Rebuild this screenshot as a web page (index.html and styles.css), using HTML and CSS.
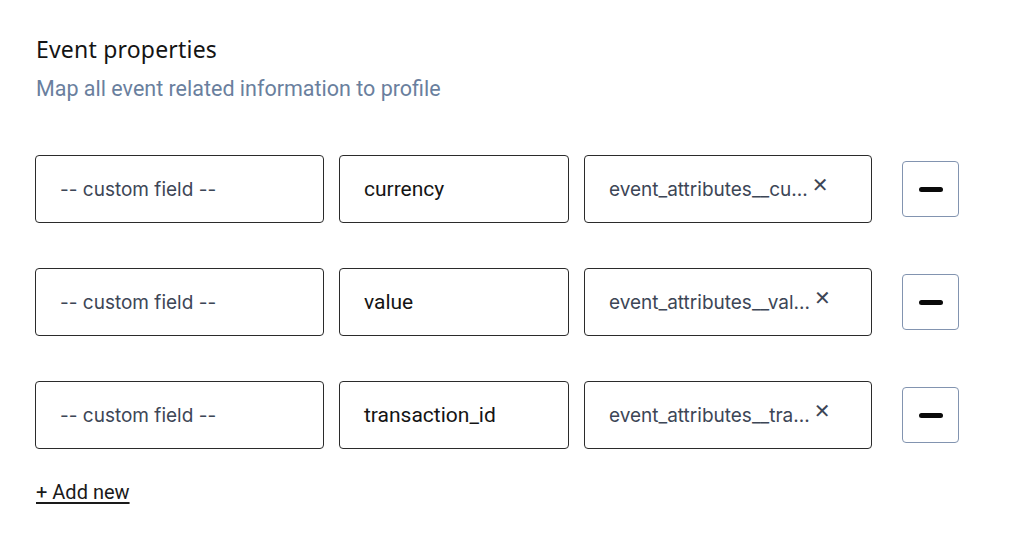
FILE: index.html
```html
<!DOCTYPE html>
<html>
<head>
<meta charset="utf-8">
<link rel="stylesheet" href="styles.css">
</head>
<body>
<section class="panel">
  <h2 class="title">Event properties</h2>
  <p class="subtitle">Map all event related information to profile</p>
  <div class="rows">
    <div class="row">
      <div class="field field-a"><span class="muted">-- custom field --</span></div>
      <div class="field field-b"><span class="value">currency</span></div>
      <div class="field field-c"><span class="muted">event_attributes__cu...</span><span class="clear">&#x2715;</span></div>
      <button class="remove"><span class="bar"></span></button>
    </div>
    <div class="row">
      <div class="field field-a"><span class="muted">-- custom field --</span></div>
      <div class="field field-b"><span class="value">value</span></div>
      <div class="field field-c"><span class="muted">event_attributes__val...</span><span class="clear">&#x2715;</span></div>
      <button class="remove"><span class="bar"></span></button>
    </div>
    <div class="row">
      <div class="field field-a"><span class="muted">-- custom field --</span></div>
      <div class="field field-b"><span class="value">transaction_id</span></div>
      <div class="field field-c"><span class="muted">event_attributes__tra...</span><span class="clear">&#x2715;</span></div>
      <button class="remove"><span class="bar"></span></button>
    </div>
  </div>
  <a class="add" href="#">+ Add new</a>
</section>
</body>
</html>
```
FILE: styles.css
```css
html, body {
  margin: 0;
  padding: 0;
  background: #ffffff;
}
.panel {
  padding: 34px 0 0 36px;
  font-family: Roboto, "Liberation Sans", sans-serif;
}
.title {
  margin: 0;
  font-family: "Noto Sans", "DejaVu Sans", sans-serif;
  font-weight: 400;
  font-size: 23px;
  line-height: 30px;
  color: #141414;
  letter-spacing: 0.2px;
}
.subtitle {
  margin: 11px 0 0 0;
  font-size: 21.5px;
  line-height: 28px;
  color: #6a7f9e;
}
.rows {
  margin-top: 52px;
  margin-left: -1px;
  display: flex;
  flex-direction: column;
  gap: 45px;
}
.row {
  display: flex;
  align-items: center;
  height: 68px;
}
.field {
  box-sizing: border-box;
  height: 68px;
  border: 1.5px solid #2b2b2b;
  border-radius: 4px;
  display: flex;
  align-items: center;
  padding-left: 24px;
  margin-right: 15px;
}
.field-a { width: 289px; }
.field-b { width: 230px; }
.field-c { width: 288px; }
.muted {
  font-family: Inter, "Noto Sans", sans-serif;
  font-size: 19px;
  color: #3d4656;
}
.value {
  font-size: 21px;
  color: #141414;
}
.clear {
  font-family: "DejaVu Sans", sans-serif;
  font-size: 20px;
  font-weight: 700;
  color: #3d4656;
  margin-left: 4px;
  margin-top: -9px;
}
.remove {
  box-sizing: border-box;
  width: 57px;
  height: 56px;
  margin-left: 15px;
  border: 1.5px solid #8294b0;
  border-radius: 4px;
  background: #fff;
  display: flex;
  align-items: center;
  justify-content: center;
  padding: 0;
}
.bar {
  display: block;
  width: 24px;
  height: 5px;
  border-radius: 3px;
  background: #0a0a0a;
}
.add {
  display: inline-block;
  margin-top: 31px;
  font-size: 20px;
  color: #1a1a1a;
  text-decoration: underline;
  text-underline-offset: 3px;
}
```
